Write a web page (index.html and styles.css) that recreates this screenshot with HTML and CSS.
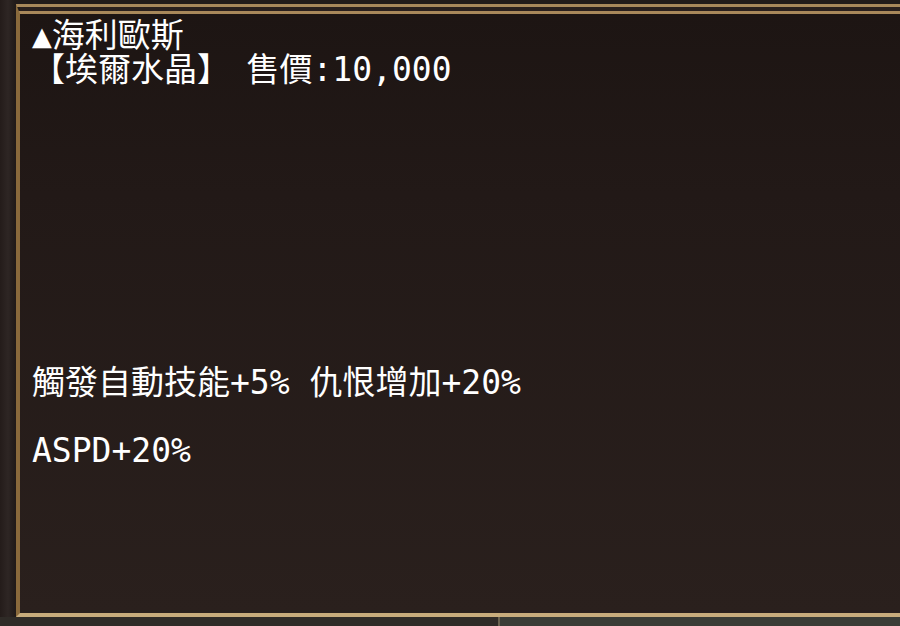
FILE: index.html
```html
<!DOCTYPE html>
<html lang="zh-Hant">
<head>
    <meta charset="UTF-8">
    <meta name="viewport" content="width=device-width, initial-scale=1.0">
    <title>埃爾水晶</title>
    <link rel="stylesheet" href="styles.css">
</head>
<body>

<div class="screen">
    <!-- 物品說明視窗 -->
    <div class="item-window">
        <p class="item-head">▲海利歐斯<br>【埃爾水晶】　售價:10,000</p>
        <p class="item-desc">觸發自動技能+5% 仇恨增加+20%</p>
        <p class="item-stat">ASPD+20%</p>
    </div>

    <!-- 下方面板邊緣 -->
    <div class="bottom-strip">
        <div class="next-panel"></div>
    </div>
</div>

</body>
</html>
```

FILE: styles.css
```css
body {
    margin: 0;
    background-color: #2a2320;
    overflow: hidden;
}
.screen {
    width: 900px;
    height: 626px;
    padding-top: 4px;
    padding-left: 16px;
    box-sizing: border-box;
    background: linear-gradient(90deg, #241c1a 0px, #2e2624 8px, #221b19 15px);
}
.item-window {
    height: 613px;
    box-sizing: border-box;
    margin-right: -20px;
    border-top: 10px double #a8885a;
    border-left: 4px solid #8a6a3c;
    border-bottom: 4px solid #c8ac7c;
    background: linear-gradient(180deg, #1d1513 0%, #221917 30%, #2a201d 100%);
    padding: 5px 0 0 12px;
    color: #ffffff;
    font-family: "DejaVu Sans Mono", "Noto Sans CJK TC", monospace;
    font-size: 33px;
}
.item-window p {
    margin: 0;
    line-height: 34px;
    white-space: pre;
}
.item-window .item-desc {
    margin-top: 279px;
}
.item-window .item-stat {
    margin-top: 34px;
}
.bottom-strip {
    height: 9px;
    margin-left: -16px;
    margin-right: -20px;
    background-color: #2f2b27;
    display: flex;
    justify-content: flex-end;
}
.next-panel {
    width: 420px;
    border-left: 2px solid #6a6250;
    background-color: #3a3c36;
}
```
